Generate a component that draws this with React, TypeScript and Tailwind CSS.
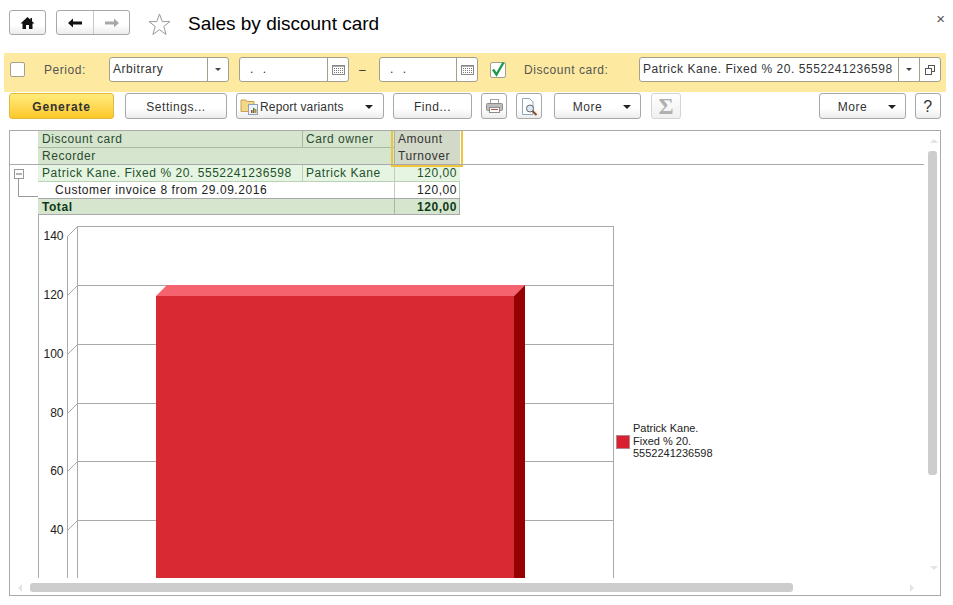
import type { ReactNode } from 'react';

const FONT = "font-['Liberation_Sans',Arial,sans-serif]";

const BTN =
  'flex h-[26px] shrink-0 items-center justify-center rounded-[3px] border border-[#a8a8a8] bg-gradient-to-b from-white from-60% to-[#ececec] pt-px text-[12px] tracking-[0.55px] text-[#333]';

function Caret() {
  return <span className="h-0 w-0 border-x-[4px] border-t-[4px] border-x-transparent border-t-[#222]" />;
}

function SmallCaret() {
  return <span className="h-0 w-0 border-x-[3px] border-t-[3px] border-x-transparent border-t-[#444]" />;
}

function Calendar() {
  return (
    <svg width="13" height="10" viewBox="0 0 13 10">
      <rect x="0.5" y="0.5" width="12" height="9" fill="#fff" stroke="#888" />
      <rect x="1" y="1" width="11" height="1" fill="#aaa" />
      {[2, 4, 6, 8, 10].map((x) => (
        <g key={x} fill="#777">
          <rect x={x} y="3" width="1" height="1" />
          <rect x={x} y="5" width="1" height="1" />
          <rect x={x} y="7" width="1" height="1" />
        </g>
      ))}
    </svg>
  );
}

function Field({ width, children, split }: { width: string; children: ReactNode; split: ReactNode }) {
  return (
    <div className={`flex h-[25px] shrink-0 rounded-[3px] border border-[#a3a08e] bg-white ${width}`}>
      <div className="min-w-0 flex-1 overflow-hidden whitespace-nowrap pl-[3px] text-[12px] leading-[23px] tracking-[0.55px] text-[#333]">
        {children}
      </div>
      {split}
    </div>
  );
}

function Split({ width, children }: { width: string; children: ReactNode }) {
  return <div className={`flex shrink-0 items-center justify-center border-l border-[#a3a08e] ${width}`}>{children}</div>;
}

function Toolbar() {
  return (
    <div className="ml-[9px] mt-[1px] flex h-[26px] w-[932px] items-center">
      <button className="flex h-[26px] w-[105px] shrink-0 items-center justify-center rounded-[3px] border border-[#e2b93a] bg-gradient-to-b from-[#ffec7a] to-[#fdc822] pt-px text-[12px] font-bold tracking-[0.8px] text-[#333]">
        Generate
      </button>
      <button className={`${BTN} ml-[11px] w-[102px]`}>Settings...</button>
      <button className={`${BTN} ml-[9px] w-[148px] !justify-start pl-[3px]`}>
        <svg width="20" height="19" viewBox="0 0 20 19" className="shrink-0">
          <path d="M1 3h5l1 1.500h7v10H1z" fill="#f3d889" stroke="#c9a24e" />
          <rect x="8.500" y="7.500" width="9" height="10" fill="#eef1f6" stroke="#8fa0b8" />
          <rect x="11" y="13" width="1.500" height="3" fill="#c0392b" />
          <rect x="13" y="11" width="1.500" height="5" fill="#3a7d3a" />
          <rect x="15" y="12" width="1.500" height="4" fill="#c98a2b" />
        </svg>
        <span className="tracking-[0.15px]">Report variants</span>
        <span className="ml-[21px] flex">
          <Caret />
        </span>
      </button>
      <button className={`${BTN} ml-[9px] w-[79px]`}>Find...</button>
      <button className={`${BTN} ml-[9px] w-[26px]`}>
        <svg width="17" height="15" viewBox="0 0 17 15">
          <rect x="4.500" y="0.500" width="8" height="4" fill="#fff" stroke="#a0a0a0" />
          <rect x="0.500" y="4.500" width="16" height="7" rx="1" fill="#bdbdbd" stroke="#8c8c8c" />
          <rect x="3.500" y="8.500" width="10" height="5" fill="#fff" stroke="#8c8c8c" />
          <rect x="5" y="10" width="7" height="1" fill="#b5533c" />
        </svg>
      </button>
      <button className={`${BTN} ml-[9px] w-[26px]`}>
        <svg width="17" height="18" viewBox="0 0 17 18">
          <path d="M1.500.5h7l3.500 3.500v12.500H1.500z" fill="#fff" stroke="#8ea4c0" />
          <circle cx="9" cy="10.500" r="3.500" fill="#dbe9f7" stroke="#666" />
          <path d="M11.500 13l4 4" stroke="#8a4a1f" strokeWidth="2" />
        </svg>
      </button>
      <button className={`${BTN} ml-[12px] w-[87px] pl-[9px]`}>
        <span>More</span>
        <span className="ml-[21px] flex">
          <Caret />
        </span>
      </button>
      <button className="ml-[10px] flex h-[26px] w-[30px] shrink-0 items-center justify-center rounded-[3px] border border-[#d4d4d4] bg-gradient-to-b from-white to-[#f0f0f0] font-['Liberation_Serif',serif] text-[23px] font-bold leading-none text-[#b0b0b0]">
        Σ
      </button>
      <div className="flex-1" />
      <button className={`${BTN} w-[87px] pl-[9px]`}>
        <span>More</span>
        <span className="ml-[21px] flex">
          <Caret />
        </span>
      </button>
      <button className={`${BTN} ml-[9px] w-[26px] !text-[16px]`}>?</button>
    </div>
  );
}

function ReportTable() {
  const cell = 'overflow-hidden whitespace-nowrap pl-[3px] pr-[3px] text-[12px] leading-[16px] tracking-[0.55px]';
  return (
    <div className="flex">
      <svg width="28" height="84" viewBox="0 0 28 84" className="shrink-0">
        <rect x="4.500" y="38.500" width="9" height="9" fill="#fff" stroke="#999" />
        <rect x="6" y="42.500" width="6" height="1" fill="#666" />
        <path d="M8.500 48v17.500H28" fill="none" stroke="#999" />
      </svg>
      <div className="w-[422px]">
        <div className="relative h-[34px] bg-[#d6e5ce] text-[#2b4a30]">
          <div className="grid grid-cols-[265px_92px_65px]">
            <div className={`${cell} h-[17px] border-r border-b border-[#a9b8a3] !pl-[4px]`}>Discount card</div>
            <div className={`${cell} h-[17px] border-r border-b border-[#a9b8a3]`}>Card owner</div>
            <div className={`${cell} h-[17px] bg-[#d2d9c8] text-[#333]`}>Amount</div>
            <div className={`${cell} col-span-2 h-[17px] border-r border-[#a9b8a3] !pl-[4px]`}>Recorder</div>
            <div className={`${cell} h-[17px] bg-[#d2d9c8] text-[#333]`}>Turnover</div>
          </div>
          <div className="absolute -bottom-[2px] -top-[1px] left-[353px] w-[72px] border-x-2 border-b-2 border-[#f0c33c]" />
        </div>
        <div className="grid h-[17px] grid-cols-[265px_92px_65px] border-b border-[#bcd0b6] bg-[#e6f5e1] text-[#23502c]">
          <div className={`${cell} border-r border-[#bcd0b6] !pl-[4px]`}>Patrick Kane. Fixed % 20. 5552241236598</div>
          <div className={`${cell} border-r border-[#bcd0b6]`}>Patrick Kane</div>
          <div className={`${cell} text-right`}>120,00</div>
        </div>
        <div className="grid h-[16px] grid-cols-[357px_65px] border-r border-[#bcd0b6] bg-white text-[#222]">
          <div className={`${cell} border-r border-[#bcd0b6] !pl-[17px]`}>Customer invoice 8 from 29.09.2016</div>
          <div className={`${cell} text-right`}>120,00</div>
        </div>
        <div className="grid h-[17px] grid-cols-[357px_65px] border border-l-0 border-[#a9a9a9] bg-[#d6e5ce] font-bold text-[#0d3a1a]">
          <div className={`${cell} border-r border-[#a9b8a3] !pl-[4px]`}>Total</div>
          <div className={`${cell} text-right`}>120,00</div>
        </div>
      </div>
    </div>
  );
}

const GRID = [226, 285, 344, 403, 461, 520];
const LABELS = ['140', '120', '100', '80', '60', '40'];

function Chart() {
  return (
    <svg width="720" height="363" viewBox="10 215 720 363" className="block shrink-0">
      <g stroke="#a9a9a9" fill="none">
        <path d="M38.500 215v363M67.500 236v342M77.500 226v352M613.500 226v352" />
        {GRID.map((y) => (
          <g key={y}>
            <path d={`M77.500 ${y + 0.5}H613.500`} />
            <path d={`M67.500 ${y + 10.5}L77.500 ${y + 0.5}`} />
          </g>
        ))}
      </g>
      <polygon points="156,296 167,285 525,285 514,296" fill="#f4636e" />
      <rect x="156" y="296" width="358" height="282" fill="#d92932" />
      <polygon points="514,296 525,285 525,578 514,578" fill="#960000" />
      <g fontSize="12" fill="#222" textAnchor="end" fontFamily="'Liberation Sans', Arial, sans-serif">
        {LABELS.map((label, i) => (
          <text key={label} x="63.500" y={GRID[i] + 13.5}>
            {label}
          </text>
        ))}
      </g>
      <rect x="616.500" y="435.500" width="13" height="13" fill="#d92032" stroke="#b5888c" />
      <g fontSize="11" fill="#222" fontFamily="'Liberation Sans', Arial, sans-serif">
        <text x="633" y="432">Patrick Kane.</text>
        <text x="633" y="445">Fixed % 20.</text>
        <text x="633" y="457">5552241236598</text>
      </g>
    </svg>
  );
}

export default function App() {
  return (
    <div className={`h-[605px] w-[953px] overflow-hidden bg-white ${FONT}`}>
      <div className="flex h-[53px] pt-[10px]">
        <button className={`${BTN} ml-[9px] !h-[25px] w-[37px]`}>
          <svg width="15" height="14" viewBox="0 0 15 14">
            <path d="M7.500 1L0.500 7.500H2.500V13H6V9H9V13H12.500V7.500H14.500L12 5.200V2H10.500V3.800Z" fill="#111" />
          </svg>
        </button>
        <div className="ml-[10px] flex h-[25px] w-[74px] rounded-[3px] border border-[#a8a8a8] bg-gradient-to-b from-white from-60% to-[#ececec]">
          <div className="flex w-[37px] items-center justify-center border-r border-[#c8c8c8]">
            <svg width="14" height="10" viewBox="0 0 14 10">
              <path d="M0 5L5 0.500V3.500H14V6.500H5V9.500Z" fill="#111" />
            </svg>
          </div>
          <div className="flex flex-1 items-center justify-center">
            <svg width="14" height="10" viewBox="0 0 14 10">
              <path d="M14 5L9 0.500V3.500H0V6.500H9V9.500Z" fill="#a8a8a8" />
            </svg>
          </div>
        </div>
        <svg width="23" height="23" viewBox="0 0 23 23" className="ml-[18px] mt-[3px] shrink-0">
          <path d="M11.500 1L14.200 8.600H22L15.800 13.400L18.100 21.500L11.500 16.700L4.900 21.500L7.200 13.400L1 8.600H8.800Z" fill="#fff" stroke="#9a9a9a" />
        </svg>
        <h1 className="ml-[17px] whitespace-nowrap text-[19px] font-normal leading-[28px] text-black">Sales by discount card</h1>
        <div className="flex-1" />
        <span className="mr-[8px] mt-[1px] text-[15px] leading-[16px] text-[#555]">×</span>
      </div>

      <div className="ml-[4px] flex h-[39px] w-[942px] items-center bg-[#fdeaa0] pb-[10px] pt-[4px] text-[12px] tracking-[0.55px] text-[#555]">
        <span className="ml-[6px] h-[15px] w-[15px] shrink-0 rounded-[2px] border border-[#a3a08e] bg-white" />
        <span className="ml-[19px] w-[65px] shrink-0">Period:</span>
        <Field width="w-[120px]" split={<Split width="w-[21px]"><SmallCaret /></Split>}>
          Arbitrary
        </Field>
        <Field width="ml-[10px] w-[110px]" split={<Split width="w-[21px]"><Calendar /></Split>}>
          <span className="pl-[7px] tracking-[3px]">. .</span>
        </Field>
        <span className="ml-[10px] w-[20px] shrink-0 text-[#333]">–</span>
        <Field width="w-[99px]" split={<Split width="w-[21px]"><Calendar /></Split>}>
          <span className="pl-[7px] tracking-[3px]">. .</span>
        </Field>
        <span className="ml-[12px] flex h-[16px] w-[16px] shrink-0 items-center justify-center rounded-[2px] border border-[#a3a08e] bg-white">
          <svg width="16" height="16" viewBox="0 0 16 16" className="shrink-0 overflow-visible">
            <path d="M3 7.500L6.500 12.500L13.500 0.500" fill="none" stroke="#1f9a4c" strokeWidth="2.400" />
          </svg>
        </span>
        <span className="ml-[18px] w-[115px] shrink-0">Discount card:</span>
        <Field
          width="w-[302px]"
          split={
            <>
              <Split width="w-[21px]"><SmallCaret /></Split>
              <Split width="w-[21px]">
                <svg width="10" height="10" viewBox="0 0 10 10">
                  <rect x="3.500" y="0.500" width="6" height="6" fill="#fff" stroke="#555" />
                  <rect x="0.500" y="3.500" width="6" height="6" fill="#fff" stroke="#555" />
                </svg>
              </Split>
            </>
          }
        >
          Patrick Kane. Fixed % 20. 5552241236598
        </Field>
      </div>

      <Toolbar />

      <div className="relative ml-[9px] mt-[11px] h-[466px] w-[932px] overflow-hidden border border-[#a9a9a9]">
        <ReportTable />
        <Chart />
        {/* line under the header, it runs past the table on both sides */}
        <div className="absolute left-0 top-[33px] h-px w-[914px] bg-[#a9a9a9]" />
        <div className="absolute left-[918px] top-[20px] h-[324px] w-[9px] rounded-[3px] bg-[#cdcdcd]" />
        <div className="absolute left-[20px] top-[452px] h-[9px] w-[763px] rounded-[3px] bg-[#cdcdcd]" />
        <span className="absolute left-[920px] top-[8px] h-0 w-0 border-x-[4px] border-b-[4px] border-x-transparent border-b-[#e4e4e4]" />
        <span className="absolute left-[920px] top-[435px] h-0 w-0 border-x-[4px] border-t-[4px] border-x-transparent border-t-[#e4e4e4]" />
        <span className="absolute left-[8px] top-[453px] h-0 w-0 border-y-[4px] border-r-[4px] border-y-transparent border-r-[#e4e4e4]" />
        <span className="absolute left-[900px] top-[453px] h-0 w-0 border-y-[4px] border-l-[4px] border-y-transparent border-l-[#e4e4e4]" />
      </div>
    </div>
  );
}
